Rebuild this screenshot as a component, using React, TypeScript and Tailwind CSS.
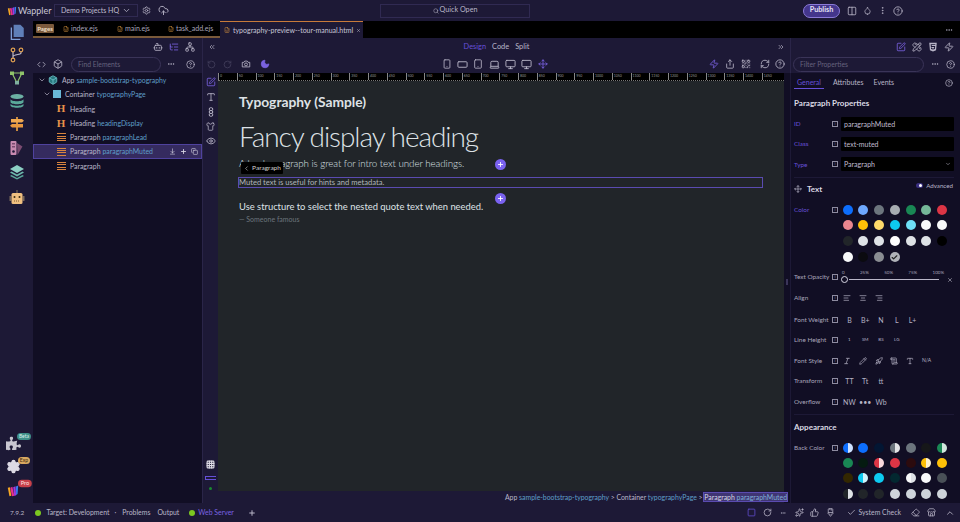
import {
  AlignCenter,
  AlignLeft,
  AlignRight,
  ArrowDownToLine,
  Bot,
  Box,
  Check,
  ChevronDown,
  ChevronLeft,
  ChevronUp,
  ChevronsLeft,
  ChevronsRight,
  CircleHelp,
  CloudUpload,
  Code,
  Columns2,
  Copy,
  Droplet,
  Ellipsis,
  EllipsisVertical,
  Eraser,
  Eye,
  FileCode,
  Grid3x3,
  Italic,
  Laptop,
  ListTree,
  Monitor,
  Moon,
  Move,
  Network,
  PaintbrushVertical,
  Pencil,
  PencilRuler,
  Plus,
  QrCode,
  RectangleHorizontal,
  RefreshCw,
  Rocket,
  RotateCcw,
  RotateCw,
  ScrollText,
  Search,
  Settings,
  Share,
  Shirt,
  Smartphone,
  Sparkles,
  Square,
  SquarePen,
  Store,
  Tablet,
  ThumbsUp,
  Type,
  X,
  Zap,
} from "lucide-react";
import { FaHtml5, FaPuzzlePiece } from "react-icons/fa";
import type { ReactNode } from "react";

function Logo() {
  return (
    <svg viewBox="0 0 12 12" className="h-[10px] w-[10px]">
      <path d="M1 3l2-.6L4.4 10.5 2.6 11z" fill="#f5a623" />
      <path d="M3.4 3l2-1L7.2 10.5 5 11z" fill="#e8308c" />
      <path d="M6.2 2.4L8.4 1.4 9 10 7.2 10.8z" fill="#a03ae0" />
      <path d="M8.8 1.6L11 .8 10.4 9 9 9.8z" fill="#3a7bf0" />
    </svg>
  );
}

function RailIcon({ className, children }: { className?: string; children: ReactNode }) {
  return (
    <svg viewBox="0 0 16 16" className={"h-[16px] w-[16px] " + (className ?? "")}>
      {children}
    </svg>
  );
}

function TreeRow({
  indent,
  icon,
  name,
  id,
  selected,
}: {
  indent: string;
  icon: ReactNode;
  name: string;
  id?: string;
  selected?: boolean;
}) {
  return (
    <div
      className={
        "flex h-[14.3px] items-center text-[6.9px] " +
        indent +
        (selected ? " border border-[#4f429e] bg-[#352b5f]" : "")
      }
    >
      {icon}
      <span className="ml-[4px] whitespace-nowrap text-[#b9b6c8]">{name}</span>
      {id && <span className="ml-[2px] whitespace-nowrap text-[#5f9fc8]">{id}</span>}
      {selected && (
        <div className="mr-[3px] ml-auto flex items-center gap-[4px] text-[#d8d6e4]">
          <ArrowDownToLine size={7} />
          <Plus size={7} strokeWidth={3} />
          <Copy size={7} />
        </div>
      )}
    </div>
  );
}

const hIcon = <span className="w-[10px] text-center font-['Liberation_Serif',serif] text-[11px] leading-none font-bold text-[#e8924a]">H</span>;
const pIcon = (
  <span className="flex h-[8px] w-[9px] flex-col justify-between">
    <span className="h-[1px] bg-[#d9853f]" />
    <span className="h-[1px] bg-[#d9853f]" />
    <span className="h-[1px] bg-[#d9853f]" />
    <span className="h-[1px] bg-[#d9853f]" />
  </span>
);

function PropRow({ label, purple, children, className }: { label: string; purple?: boolean; children: ReactNode; className?: string }) {
  return (
    <div className={"flex items-center " + (className ?? "")}>
      <span className={"w-[38px] whitespace-nowrap text-[6.4px] " + (purple ? "text-[#6650d8]" : "text-[#a9a6bb]")}>{label}</span>
      <span className="mr-[3px] flex h-[6px] w-[6px] shrink-0 items-center justify-center border border-[#8e8ba0] text-[4px] leading-none text-[#8e8ba0]">i</span>
      {children}
    </div>
  );
}

function Options({ items }: { items: string[] }) {
  return (
    <div className="flex items-center pl-[0.5px]">
      {items.map((t) => (
        <span key={t} className="w-[15.8px] text-center text-[7px] whitespace-nowrap text-[#b5b3c4]">
          {t}
        </span>
      ))}
    </div>
  );
}

const textColors = [
  ["bg-[#0d6efd]", "bg-[#6ea8fe]", "bg-[#6c757d]", "bg-[#a7acb1]", "bg-[#198754]", "bg-[#75b798]", "bg-[#dc3545]"],
  ["bg-[#ea868f]", "bg-[#ffc107]", "bg-[#ffda6a]", "bg-[#0dcaf0]", "bg-[#6edff6]", "bg-[#f8f9fa]", "bg-[#f8f9fa]"],
  ["bg-[#212529]", "bg-[#dee2e6]", "bg-[#dee2e6]", "bg-[#ffffff]", "bg-[#dee2e6]", "bg-[#dee2e6]", "bg-[#000000]"],
];

const backColors = [
  ["bg-[linear-gradient(90deg,#0d6efd_50%,#cfe2ff_50%)]", "bg-[#0d6efd]", "bg-[#031633]", "bg-[linear-gradient(90deg,#6c757d_50%,#e2e3e5_50%)]", "bg-[#6c757d]", "bg-[#161719]", "bg-[linear-gradient(90deg,#198754_50%,#d1e7dd_50%)]"],
  ["bg-[#198754]", "bg-[#051b11]", "bg-[linear-gradient(90deg,#dc3545_50%,#f8d7da_50%)]", "bg-[#dc3545]", "bg-[#2c0b0e]", "bg-[linear-gradient(90deg,#ffc107_50%,#fff3cd_50%)]", "bg-[#ffc107]"],
  ["bg-[#332701]", "bg-[linear-gradient(90deg,#0dcaf0_50%,#cff4fc_50%)]", "bg-[#0dcaf0]", "bg-[#032830]", "bg-[linear-gradient(90deg,#f8f9fa_50%,#dee2e6_50%)]", "bg-[#f8f9fa]", "bg-[#495057]"],
  ["bg-[linear-gradient(90deg,#212529_50%,#dee2e6_50%)]", "bg-[#212529]", "bg-[#212529]", "bg-[#ced4da]", "bg-[#ced4da]", "bg-[#ced4da]", "bg-[#ced4da]"],
];

function SwatchRow({ colors, className }: { colors: string[]; className?: string }) {
  return (
    <div className={"flex items-center gap-[5.75px] " + (className ?? "")}>
      {colors.map((c, i) => (
        <span key={i} className={"h-[10px] w-[10px] shrink-0 rounded-full " + c} />
      ))}
    </div>
  );
}

const rulerMarks = Array.from({ length: 30 }, (_, i) => i * 50);

export default function App() {
  return (
    <div className="flex h-[522px] w-[960px] flex-col overflow-hidden bg-[#1d1936] font-['Lato',sans-serif] text-[#b9b6c8]">
      {/* title bar */}
      <div className="flex h-[21px] shrink-0 items-center pr-[55px] pl-[7px]">
        <Logo />
        <span className="ml-[1px] w-[35px] text-[9px] text-[#c9c7d6]">Wappler</span>
        <div className="ml-[1px] flex h-[13px] w-[84px] items-center border border-[#302a52] pl-[6px] text-[7px] text-[#c0bed0]">
          <span className="whitespace-nowrap">Demo Projects HQ</span>
          <ChevronDown size={9} className="mr-[6px] ml-auto" />
        </div>
        <Settings size={9} className="ml-[4px]" />
        <CloudUpload size={11} className="ml-[7px]" />
        <div className="ml-[211px] flex h-[14px] w-[150px] items-center justify-center gap-[1px] border border-[#302a52] text-[7.2px] text-[#b9b6c8]">
          <Search size={6} />
          Quick Open
        </div>
        <div className="ml-[273px] flex h-[14px] w-[37px] items-center justify-center rounded-full border border-[#8b7ad8] bg-[#44368c] text-[7.2px] font-bold text-[#e4e1f4]">
          Publish
        </div>
        <Columns2 size={10} className="ml-[7px]" />
        <Droplet size={9} className="ml-[6px]" />
        <EllipsisVertical size={9} className="ml-[6px]" />
        <CircleHelp size={10} className="ml-[6px]" />
      </div>

      <div className="flex min-h-0 flex-1">
        {/* activity rail */}
        <div className="flex w-[33px] shrink-0 flex-col items-center pt-[1px] pb-[7px]">
          <RailIcon className="mt-[1px] h-[18px] w-[18px]">
            <path d="M5 1.5h6l3 3v8H5z" fill="#5f7fb8" />
            <path d="M3 4v10.5h8" fill="none" stroke="#7f9fd8" strokeWidth="1.2" />
          </RailIcon>
          <RailIcon className="mt-[6px]">
            <path d="M4 4v8M12 4v2c0 2-8 1-8 4" fill="none" stroke="#b9b6c8" strokeWidth="1.2" />
            <circle cx="4" cy="3" r="1.8" fill="none" stroke="#e0a050" strokeWidth="1.2" />
            <circle cx="12" cy="3" r="1.8" fill="none" stroke="#e0a050" strokeWidth="1.2" />
            <circle cx="4" cy="13" r="1.8" fill="none" stroke="#e0a050" strokeWidth="1.2" />
          </RailIcon>
          <RailIcon className="mt-[7px]">
            <path d="M3 3h10M3 3l5 10M13 3l-5 10" fill="none" stroke="#8fc36a" strokeWidth="1.2" />
            <rect x="1" y="1.5" width="4" height="3.5" fill="#8fc36a" />
            <rect x="11" y="1.5" width="4" height="3.5" fill="#8fc36a" />
            <rect x="6" y="11" width="4" height="3.5" fill="#7fb0a0" />
          </RailIcon>
          <RailIcon className="mt-[7px]">
            <ellipse cx="8" cy="3.5" rx="6.5" ry="2.5" fill="#6cb0a4" />
            <path d="M1.5 6c0 3 13 3 13 0v3c0 3-13 3-13 0z" fill="#5aa89a" />
            <path d="M1.5 10.5c0 3 13 3 13 0v2c0 3-13 3-13 0z" fill="#5aa89a" />
          </RailIcon>
          <RailIcon className="mt-[7px]">
            <path d="M7 1h2v14H7z" fill="#c88a40" />
            <path d="M2 3h11l2 1.7L13 6.5H2z" fill="#f0a850" />
            <path d="M14 8H3L1 9.7 3 11.5h11z" fill="#e89840" />
          </RailIcon>
          <RailIcon className="mt-[8px]">
            <path d="M8 3l5.5 3.5L8.5 15z" fill="#7a4a70" />
            <rect x="1.5" y="1" width="6" height="14" rx="1" fill="#c88ab0" />
            <circle cx="4.5" cy="11.5" r="1.3" fill="#1d1936" />
            <rect x="3" y="3" width="3" height="1.5" fill="#7a4a70" />
            <rect x="3" y="6" width="3" height="1.5" fill="#7a4a70" />
          </RailIcon>
          <RailIcon className="mt-[8px]">
            <path d="M8 1l7 4-7 4-7-4z" fill="#8cd0c4" />
            <path d="M2.5 7.5l5.5 3 5.5-3 1.5 1-7 4-7-4z" fill="#6cb8ac" />
            <path d="M2.5 11l5.5 3 5.5-3 1.5 1-7 3.5L1 12z" fill="#5aa89a" />
          </RailIcon>
          <RailIcon className="mt-[10px]">
            <path d="M8 0v3" stroke="#7a6a5a" strokeWidth="1.2" />
            <rect x=".5" y="6" width="1.8" height="5" fill="#7a6a5a" />
            <rect x="13.7" y="6" width="1.8" height="5" fill="#7a6a5a" />
            <rect x="2.5" y="3" width="11" height="11" rx="1.5" fill="#f0c080" />
            <circle cx="5.5" cy="7" r="1" fill="#3a2a10" />
            <circle cx="10.5" cy="7" r="1" fill="#3a2a10" />
            <path d="M5 11h6" stroke="#7a5a30" strokeWidth="1" strokeDasharray="1 1" />
          </RailIcon>
          <div className="relative mt-auto mr-[6px]">
            <FaPuzzlePiece size={15} className="text-[#c8c6d0]" />
            <span className="absolute -top-[3px] -right-[10px] rounded-full bg-[#3f8f88] px-[2px] text-[5px] leading-[7px] text-[#d8f0ec]">Beta</span>
          </div>
          <div className="relative mt-[8px] mr-[6px]">
            <Settings size={15} fill="#dcdae4" className="text-[#dcdae4]" />
            <span className="absolute -top-[2px] -right-[9px] rounded-full bg-[#d9a860] px-[2px] text-[5px] leading-[7px] text-[#3a2a10]">Exp</span>
          </div>
          <div className="relative mt-[12px] mr-[8px] scale-125">
            <Logo />
            <span className="absolute -top-[4px] -right-[10px] rounded-full bg-[#c8404a] px-[2px] text-[4.5px] leading-[6px] text-[#ffe0e0]">Pro</span>
          </div>
        </div>

        <div className="flex min-w-0 flex-1 flex-col">
          {/* open files */}
          <div className="flex h-[17px] shrink-0 bg-black text-[7px] text-[#a9a6bb]">
            <div className="flex w-[187px] items-center border-b-2 border-[#7a5a3a] pl-[3px]">
              <span className="w-[18px] rounded-[1px] bg-[#7b5a3c] text-center text-[6px] leading-[9px] font-bold text-[#f0e0cc]">Pages</span>
              <FileCode size={6} className="ml-[9px] shrink-0 text-[#d9953f]" />
              <span className="ml-[2px] w-[46px]">index.ejs</span>
              <FileCode size={6} className="shrink-0 text-[#d9953f]" />
              <span className="ml-[2px] w-[43px]">main.ejs</span>
              <FileCode size={6} className="shrink-0 text-[#d9953f]" />
              <span className="ml-[2px] whitespace-nowrap">task_add.ejs</span>
            </div>
            <div className="flex w-[143px] items-center border-t border-[#c87a3a] bg-[#1d1936] pl-[4px] text-[#c9c7d6]">
              <FileCode size={6} className="shrink-0 text-[#d9953f]" />
              <span className="ml-[3px] whitespace-nowrap">typography-preview--tour-manual.html</span>
              <X size={5} className="ml-[3px] shrink-0" />
            </div>
            <Ellipsis size={8} className="mt-[5px] mr-[7px] ml-auto" />
          </div>

          <div className="flex min-h-0 flex-1">
            {/* element tree */}
            <div className="flex w-[169px] shrink-0 flex-col bg-[#110e24]">
              <div className="flex h-[17px] shrink-0 items-center justify-end gap-[6px] bg-[#1d1936] pr-[7px]">
                <Bot size={10} className="text-[#b9b6c8]" />
                <ListTree size={10} className="text-[#7a62e0]" />
                <Network size={10} className="text-[#b9b6c8]" />
              </div>
              <div className="flex h-[18px] shrink-0 items-center bg-[#1d1936] pl-[4px]">
                <Code size={9} />
                <Box size={10} className="ml-[7px]" />
                <div className="ml-[8px] flex h-[15px] w-[90px] items-center rounded-full border border-[#3a3458] pl-[6px] text-[6.8px] text-[#66637e]">Find Elements</div>
                <Ellipsis size={8} className="ml-[6px]" />
                <CircleHelp size={9} className="ml-[11px]" />
              </div>
              <div className="flex flex-col">
                <TreeRow
                  indent="pl-[5px]"
                  icon={
                    <>
                      <ChevronDown size={8} />
                      <Box size={10} fill="#2a7a80" className="ml-[2px] text-[#6cc0c8]" />
                    </>
                  }
                  name="App"
                  id="sample-bootstrap-typography"
                />
                <TreeRow
                  indent="pl-[10px]"
                  icon={
                    <>
                      <ChevronDown size={8} />
                      <span className="ml-[2px] h-[8px] w-[8px] bg-[#6ab8d8]" />
                    </>
                  }
                  name="Container"
                  id="typographyPage"
                />
                <TreeRow indent="pl-[23px]" icon={hIcon} name="Heading" />
                <TreeRow indent="pl-[23px]" icon={hIcon} name="Heading" id="headingDisplay" />
                <TreeRow indent="pl-[24px]" icon={pIcon} name="Paragraph" id="paragraphLead" />
                <TreeRow indent="pl-[23px]" icon={pIcon} name="Paragraph" id="paragraphMuted" selected />
                <TreeRow indent="pl-[24px]" icon={pIcon} name="Paragraph" />
              </div>
            </div>

            {/* center */}
            <div className="flex min-w-0 flex-1 flex-col border-l border-[#2a2548]">
              <div className="z-10 -mr-[6px] flex h-[17px] shrink-0 items-center px-[5px] text-[7.4px]">
                <ChevronsLeft size={8} />
                <div className="flex flex-1 items-center justify-center gap-[6px]">
                  <span className="text-[#6650d8]">Design</span>
                  <span>Code</span>
                  <span>Split</span>
                </div>
                <ChevronsRight size={8} />
              </div>
              <div className="z-10 -mr-[6px] flex h-[18px] shrink-0 items-center pl-[4px] text-[#b9b6c8]">
                <RotateCcw size={9} className="text-[#46425f]" />
                <RotateCw size={9} className="ml-[7px] text-[#46425f]" />
                <svg viewBox="0 0 24 24" className="ml-[9px] h-[10px] w-[10px]" fill="none" stroke="currentColor" strokeWidth="2">
                  <path d="M3 8h4l2-3h6l2 3h4v11H3z" />
                  <circle cx="12" cy="13" r="3.5" />
                </svg>
                <Moon size={10} fill="#7a62e0" className="ml-[9px] text-[#7a62e0]" />
                <Smartphone size={10} className="ml-[172px]" />
                <RectangleHorizontal size={11} className="ml-[5px]" />
                <Tablet size={10} className="ml-[5px]" />
                <Laptop size={11} className="ml-[6px]" />
                <Monitor size={11} className="ml-[5px]" />
                <Monitor size={11} className="ml-[5px]" />
                <Move size={10} className="ml-[6px] text-[#7a62e0]" />
                <Zap size={10} className="ml-[161px] text-[#7a62e0]" />
                <Share size={10} className="ml-[6px]" />
                <QrCode size={10} className="ml-[6px]" />
                <RefreshCw size={10} className="ml-[9px]" />
                <CircleHelp size={10} className="ml-[5px]" />
              </div>
              <div className="flex min-h-0 flex-1">
                {/* tool column */}
                <div className="flex w-[15px] shrink-0 flex-col items-center pt-[4px] pb-[13px]">
                  <SquarePen size={10} className="text-[#7a62e0]" />
                  <Type size={10} className="mt-[5px]" />
                  <svg viewBox="0 0 10 14" className="mt-[5px] h-[10px] w-[8px]" fill="none" stroke="currentColor" strokeWidth="1.4">
                    <rect x="2.5" y="1" width="5" height="4" rx="2" />
                    <rect x="2.5" y="5" width="5" height="4" rx="2" />
                    <rect x="2.5" y="9" width="5" height="4" rx="2" />
                  </svg>
                  <Shirt size={9} className="mt-[5px]" />
                  <Eye size={10} className="mt-[5px]" />
                  <Grid3x3 size={9} className="mt-auto text-[#dcdae4]" strokeWidth={3} />
                  <span className="mt-[7px] h-[4px] w-[11px] border border-r-0 border-[#6650d8]" />
                  <span className="mt-[7px] h-[3px] w-[3px] rounded-full bg-[#1a8a30]" />
                </div>
                <div className="flex min-w-0 flex-1 flex-col">
                  {/* ruler */}
                  <div className="flex h-[8px] shrink-0 overflow-hidden border-b border-dotted border-[#777] bg-black">
                    {rulerMarks.map((m) => (
                      <span key={m} className="w-[18.75px] shrink-0 border-l border-[#888] pl-[1px] text-[3.5px] leading-[6px] text-[#999]">
                        {m}
                      </span>
                    ))}
                  </div>
                  {/* canvas */}
                  <div className="relative flex min-h-0 flex-1 flex-col bg-[#212529] pt-[11px] pr-[22px] pl-[21px] text-[#dee2e6]">
                    <h1 className="text-[13.8px] leading-[19px] font-bold whitespace-nowrap">Typography (Sample)</h1>
                    <h2 className="mt-[6px] text-[28px] leading-[38px] font-light tracking-[-1.05px] whitespace-nowrap">Fancy display heading</h2>
                    <p className="mt-[1px] text-[9.8px] leading-[14px] font-light tracking-[-0.07px] whitespace-nowrap">A lead paragraph is great for intro text under headings.</p>
                    <p className="-mx-[1px] mt-[7px] h-[11px] border border-[#5a4bb0] text-[7.6px] leading-[9px] whitespace-nowrap text-[#b0b4b8]">
                      Muted text is useful for hints and metadata.
                    </p>
                    <p className="mt-[12px] text-[9.4px] leading-[14px] whitespace-nowrap">Use structure to select the nested quote text when needed.</p>
                    <p className="mt-[1px] text-[7px] leading-[9px] whitespace-nowrap text-[#6c757d]">— Someone famous</p>

                    <div className="absolute top-[81px] left-[23px] flex h-[12px] w-[42px] items-center justify-center gap-[2px] rounded-[1px] bg-black text-[6.5px] text-[#d0d0d0]">
                      <ChevronLeft size={7} />
                      Paragraph
                    </div>
                    <span className="absolute top-[78px] left-[277px] flex h-[11px] w-[11px] items-center justify-center rounded-full bg-[#7a62f0] text-white">
                      <Plus size={7} strokeWidth={3} />
                    </span>
                    <span className="absolute top-[112px] left-[277px] flex h-[11px] w-[11px] items-center justify-center rounded-full bg-[#7a62f0] text-white">
                      <Plus size={7} strokeWidth={3} />
                    </span>
                  </div>
                  {/* breadcrumb */}
                  <div className="z-10 -mr-[3px] flex h-[12px] shrink-0 items-center justify-end text-[6.9px] text-[#b9b6c8]">
                    <span className="whitespace-nowrap">
                      App <span className="text-[#5f9fc8]">sample-bootstrap-typography</span> &gt; Container <span className="text-[#5f9fc8]">typographyPage</span> &gt;{" "}
                      <span className="bg-[#3f3573] text-[#d8d6e4] outline outline-[#5a4bb0]">
                        Paragraph <span className="text-[#7fb0d8]">paragraphMuted</span>
                      </span>
                    </span>
                  </div>
                </div>
              </div>
            </div>

            {/* properties */}
            <div className="flex w-[176px] shrink-0 flex-col">
              <div className="ml-[6px] flex h-[17px] shrink-0 items-center justify-end gap-[6px] border-l border-[#2a2548] pr-[6px]">
                <SquarePen size={10} className="text-[#7a62e0]" />
                <PencilRuler size={10} />
                <FaHtml5 size={10} />
                <Zap size={10} />
              </div>
              <div className="ml-[6px] flex h-[18px] shrink-0 items-center border-l border-[#2a2548] pl-[2px]">
                <div className="flex h-[15px] w-[131px] items-center rounded-full border border-[#3a3458] pl-[6px] text-[6.8px] text-[#66637e]">Filter Properties</div>
                <Ellipsis size={8} className="ml-[7px]" />
                <CircleHelp size={9} className="ml-[7px]" />
              </div>
              <div className="flex min-h-0 flex-1 bg-[#110e24]">
                <div className="relative w-[6px] shrink-0">
                  <span className="absolute top-[206px] left-[2px] h-[6px] w-[2px] bg-[#3a3458]" />
                </div>
                <div className="min-w-0 flex-1 overflow-hidden border-l border-[#1d1936] pr-[6px] pl-[3px]">
                  <div className="flex h-[17px] items-center pt-[2px] text-[7px]">
                    <span className="border-b border-[#6650d8] px-[3px] leading-[11px] text-[#6650d8]">General</span>
                    <span className="ml-[9px]">Attributes</span>
                    <span className="ml-[10px]">Events</span>
                    <CircleHelp size={8} className="mr-[1px] ml-auto" />
                  </div>
                  <div className="mt-[7px] text-[8px] leading-[12px] font-bold text-[#dcdae4]">Paragraph Properties</div>
                  <div className="mt-[8px] flex flex-col gap-[6.2px]">
                    <PropRow label="ID" purple>
                      <span className="flex h-[14px] flex-1 items-center rounded-[1px] bg-black pl-[3px] text-[7px] text-[#c0bed0]">paragraphMuted</span>
                    </PropRow>
                    <PropRow label="Class" purple>
                      <span className="flex h-[14px] flex-1 items-center rounded-[1px] bg-black pl-[3px] text-[7px] text-[#c0bed0]">text-muted</span>
                    </PropRow>
                    <PropRow label="Type" purple>
                      <span className="flex h-[14px] flex-1 items-center rounded-[1px] bg-black px-[3px] text-[7px] text-[#c0bed0]">
                        Paragraph
                        <ChevronDown size={6} className="ml-auto" />
                      </span>
                    </PropRow>
                  </div>
                  <div className="mt-[5.6px] border-t border-[#1d1936] pt-[5px]">
                    <div className="flex h-[12px] items-center">
                      <Move size={8} />
                      <span className="ml-[5px] text-[8px] font-bold text-[#dcdae4]">Text</span>
                      <span className="relative -top-[3px] mr-[1px] ml-auto flex items-center gap-[3px] text-[6.2px]">
                        <span className="flex h-[5px] w-[7px] items-center justify-end rounded-full bg-[#3a2f80] pr-[1px]">
                          <span className="h-[3px] w-[3px] rounded-full bg-white" />
                        </span>
                        Advanced
                      </span>
                    </div>
                  </div>
                  <PropRow label="Color" purple className="mt-[10px]">
                    <SwatchRow colors={textColors[0]} className="pl-[1.5px]" />
                  </PropRow>
                  <SwatchRow colors={textColors[1]} className="mt-[5.3px] pl-[48.5px]" />
                  <SwatchRow colors={textColors[2]} className="mt-[6px] pl-[48.5px]" />
                  <div className="mt-[6px] flex items-center gap-[5.75px] pl-[48.5px]">
                    <span className="h-[10px] w-[10px] rounded-full bg-[#f8f9fa]" />
                    <span className="h-[10px] w-[10px] rounded-full bg-[#0b0b10]" />
                    <span className="h-[10px] w-[10px] rounded-full bg-[#8a8d92]" />
                    <span className="flex h-[10px] w-[10px] items-center justify-center rounded-full bg-[#b0b2b8] text-[#222]">
                      <Check size={7} strokeWidth={4} />
                    </span>
                  </div>
                  <PropRow label="Text Opacity" className="mt-[8px]">
                    <div className="flex-1">
                      <div className="flex w-[103px] justify-between pl-[1px] text-[4.5px] leading-[6px] text-[#a9a6bb]">
                        <span>0</span>
                        <span>25%</span>
                        <span>50%</span>
                        <span>75%</span>
                        <span>100%</span>
                      </div>
                      <div className="flex items-center">
                        <span className="h-[7px] w-[7px] rounded-full border border-[#d8d6e4]" />
                        <span className="ml-[1px] h-[1px] w-[90px] bg-[#b9b6c8]" />
                        <X size={6} className="ml-[8px] text-[#d8d6e4]" />
                      </div>
                    </div>
                  </PropRow>
                  <PropRow label="Align" className="mt-[8px] h-[14px]">
                    <div className="flex items-center gap-[8px] pl-[2px]">
                      <AlignLeft size={8} />
                      <AlignCenter size={8} />
                      <AlignRight size={8} />
                    </div>
                  </PropRow>
                  <PropRow label="Font Weight" className="mt-[7.5px] h-[14px]">
                    <Options items={["B", "B+", "N", "L", "L+"]} />
                  </PropRow>
                  <PropRow label="Line Height" className="mt-[6.5px] h-[14px]">
                    <div className="flex items-center pl-[0.5px]">
                      {["1", "SM", "BS", "LG"].map((t) => (
                        <span key={t} className="w-[15.8px] text-center text-[4.5px] text-[#b5b3c4]">
                          {t}
                        </span>
                      ))}
                    </div>
                  </PropRow>
                  <PropRow label="Font Style" className="mt-[6.5px] h-[14px]">
                    <div className="flex items-center gap-[7.8px] pl-[2px]">
                      <Italic size={8} />
                      <Pencil size={8} />
                      <Rocket size={8} />
                      <ScrollText size={8} />
                      <Type size={8} />
                      <span className="text-[5px] leading-none">N/A</span>
                    </div>
                  </PropRow>
                  <PropRow label="Transform" className="mt-[6.5px] h-[14px]">
                    <Options items={["TT", "Tt", "tt"]} />
                  </PropRow>
                  <PropRow label="Overflow" className="mt-[6.5px] h-[14px]">
                    <Options items={["NW", "•••", "Wb"]} />
                  </PropRow>
                  <div className="mt-[5px] border-t border-[#1d1936] pt-[6px] text-[8px] leading-[12px] font-bold text-[#dcdae4]">Appearance</div>
                  <PropRow label="Back Color" className="mt-[10px]">
                    <SwatchRow colors={backColors[0]} className="pl-[1.5px]" />
                  </PropRow>
                  <SwatchRow colors={backColors[1]} className="mt-[5px] pl-[48.5px]" />
                  <SwatchRow colors={backColors[2]} className="mt-[5.6px] pl-[48.5px]" />
                  <SwatchRow colors={backColors[3]} className="mt-[5.6px] pl-[48.5px]" />
                </div>
              </div>
            </div>
          </div>
        </div>
      </div>

      {/* status bar */}
      <div className="flex h-[19px] shrink-0 items-center pr-[5px] pl-[10px] text-[6.9px]">
        <span className="text-[6.5px]">7.9.2</span>
        <span className="ml-[11px] h-[6px] w-[6px] rounded-full bg-[#7cc820]" />
        <span className="ml-[5px]">Target: Development</span>
        <span className="ml-[5px]">·</span>
        <span className="ml-[6px]">Problems</span>
        <span className="ml-[7px]">Output</span>
        <span className="ml-[10px] h-[6px] w-[6px] rounded-full bg-[#7cc820]" />
        <span className="ml-[3px] text-[#7a62e0]">Web Server</span>
        <Plus size={8} strokeWidth={3} className="ml-[14px]" />
        <Square size={9} className="ml-auto text-[#6650d8]" />
        <RotateCw size={9} className="ml-[7px]" />
        <Ellipsis size={6} className="ml-[8px]" />
        <Sparkles size={9} className="ml-[9px]" />
        <ThumbsUp size={9} className="ml-[6px]" />
        <PaintbrushVertical size={9} className="ml-[7px]" />
        <Check size={9} className="ml-[12px]" />
        <span className="ml-[3px]">System Check</span>
        <Eraser size={9} className="ml-[10px]" />
        <Store size={9} className="ml-[7px]" />
        <ChevronUp size={10} className="ml-[9px]" />
      </div>
    </div>
  );
}
